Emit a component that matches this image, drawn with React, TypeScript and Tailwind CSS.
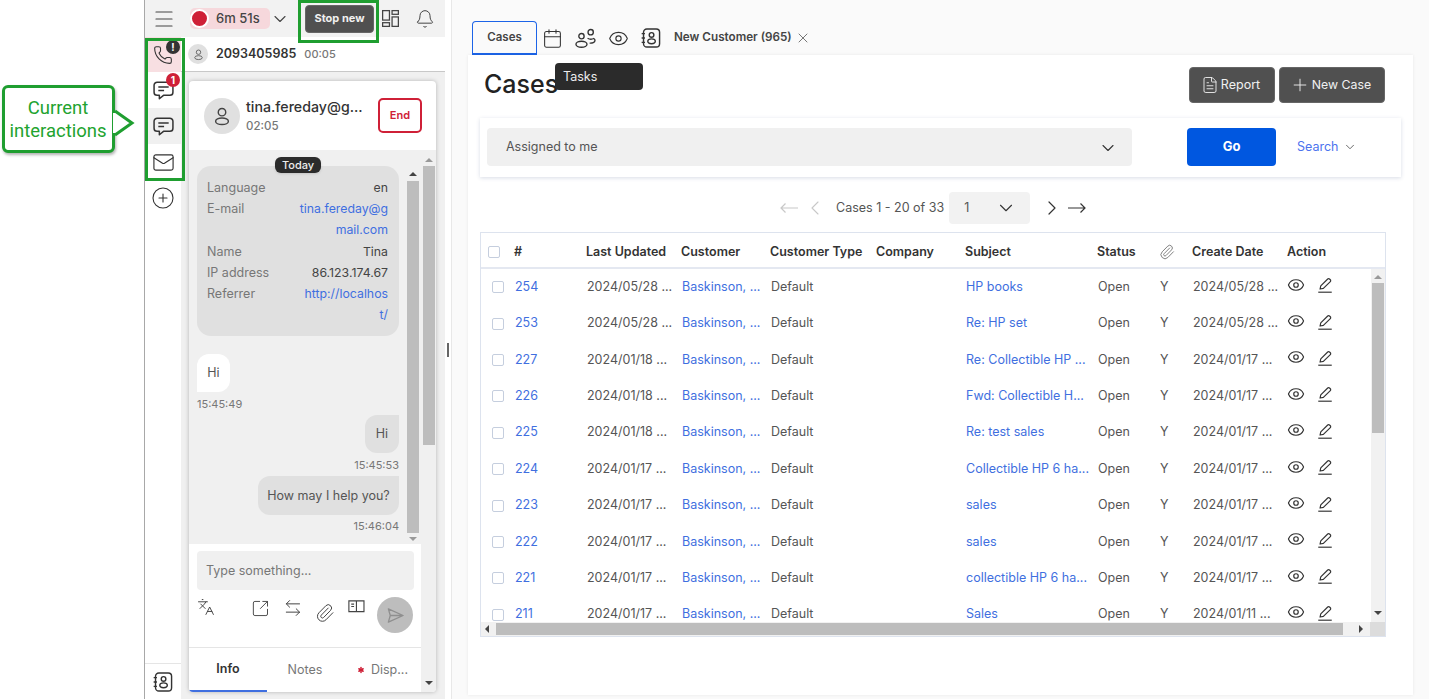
import React from 'react';
import {
  ArrowLeftRight, Asterisk, Bell, Calendar, ChevronDown, ChevronLeft, ChevronRight,
  CirclePlus, Eye, FileText, Languages, Mail, Menu, Paperclip, Phone, Plus, SquareArrowOutUpRight, X,
} from 'lucide-react';

const cols = 'grid grid-cols-[33px_72px_95px_89px_106px_89px_132px_62px_33px_95px_84px] items-center';

const rows = [
  ['254', '2024/05/28 ...', 'HP books', '2024/05/28 ...'],
  ['253', '2024/05/28 ...', 'Re: HP set', '2024/05/28 ...'],
  ['227', '2024/01/18 ...', 'Re: Collectible HP ...', '2024/01/17 ...'],
  ['226', '2024/01/18 ...', 'Fwd: Collectible H...', '2024/01/17 ...'],
  ['225', '2024/01/18 ...', 'Re: test sales', '2024/01/17 ...'],
  ['224', '2024/01/17 ...', 'Collectible HP 6 ha...', '2024/01/17 ...'],
  ['223', '2024/01/17 ...', 'sales', '2024/01/17 ...'],
  ['222', '2024/01/17 ...', 'sales', '2024/01/17 ...'],
  ['221', '2024/01/17 ...', 'collectible HP 6 ha...', '2024/01/17 ...'],
  ['211', '2024/01/17 ...', 'Sales', '2024/01/11 ...'],
];

function ChatIcon({ className }: { className?: string }) {
  return (
    <svg viewBox="0 0 20 20" fill="none" stroke="currentColor" strokeWidth="1.3" className={className}>
      <path d="M4.5 2.8h11a2.7 2.7 0 0 1 2.7 2.7v6a2.7 2.7 0 0 1-2.7 2.7H10l-3.6 3v-3H4.5a2.7 2.7 0 0 1-2.7-2.7v-6a2.7 2.7 0 0 1 2.7-2.7Z" strokeLinejoin="round" />
      <path d="M5.5 7h9M5.5 10h5" />
    </svg>
  );
}

function ContactIcon({ className }: { className?: string }) {
  return (
    <svg viewBox="0 0 20 20" fill="none" stroke="currentColor" strokeWidth="1.3" className={className}>
      <rect x="3.2" y="1.8" width="14.6" height="16.4" rx="3" />
      <path d="M1.5 6h3M1.5 10h3M1.5 14h3" />
      <circle cx="10.5" cy="7.2" r="2.1" />
      <ellipse cx="10.5" cy="13" rx="3.4" ry="2.2" />
    </svg>
  );
}

function PersonIcon({ className }: { className?: string }) {
  return (
    <svg viewBox="0 0 20 20" fill="none" stroke="currentColor" strokeWidth="1.3" className={className}>
      <circle cx="10" cy="6.5" r="3.4" />
      <ellipse cx="10" cy="14.8" rx="5.8" ry="3" />
    </svg>
  );
}

function GroupIcon({ className }: { className?: string }) {
  return (
    <svg viewBox="0 0 20 20" fill="none" stroke="currentColor" strokeWidth="1.2" className={className}>
      <circle cx="6.5" cy="8" r="2.3" />
      <ellipse cx="6.5" cy="15" rx="4.8" ry="2.6" />
      <circle cx="14.5" cy="4.5" r="2.3" />
      <path d="M11.8 9.8c1.6.9 4 .9 5.4.2 1.6.9 1.3 3-.4 3.6-1 .4-2 .5-3.2.4" />
    </svg>
  );
}

function PencilLine({ className }: { className?: string }) {
  return (
    <svg viewBox="0 0 20 20" fill="none" stroke="currentColor" strokeWidth="1.3" className={className}>
      <path d="M4.5 14.5 5.3 11 13 3.3a1.4 1.4 0 0 1 2 0l.9.9a1.4 1.4 0 0 1 0 2L8.2 13.800l-3.7.7Z" strokeLinejoin="round" />
      <path d="M2.5 18h15" />
    </svg>
  );
}

function Dashboard({ className }: { className?: string }) {
  return (
    <svg viewBox="0 0 20 20" fill="none" stroke="currentColor" strokeWidth="1.2" className={className}>
      <rect x="2.5" y="2.5" width="6.5" height="9" />
      <rect x="2.5" y="14" width="6.5" height="3.5" />
      <rect x="11.5" y="2.5" width="6" height="3.5" />
      <rect x="11.5" y="8.5" width="6" height="9" />
    </svg>
  );
}

function LongArrow({ flip, className }: { flip?: boolean; className?: string }) {
  return (
    <svg viewBox="0 0 18 12" fill="none" stroke="currentColor" strokeWidth="1.2" className={className}>
      <path d={flip ? 'M18 6H1M5.5 1.5 1 6l4.5 4.5' : 'M0 6h17M12.5 1.5 17 6l-4.5 4.5'} />
    </svg>
  );
}

function Triangle({ dir, className }: { dir: 'up' | 'down' | 'left' | 'right'; className?: string }) {
  const pts = { up: '1,6 5,2 9,6', down: '1,3 9,3 5,7', left: '6,1 6,9 2,5', right: '3,1 3,9 7,5' }[dir];
  return (
    <svg viewBox="0 0 10 10" className={className} fill="currentColor">
      <polygon points={pts} />
    </svg>
  );
}

function InfoRow({ label, value, link }: { label: string; value: string[]; link?: boolean }) {
  return (
    <div className="flex justify-between">
      <span className="text-[#777777]">{label}</span>
      <span className={link ? 'text-right text-[12.3px] text-[#3f6fe0]' : 'text-right text-[12.3px] text-[#444444]'}>
        {value.map((line) => (
          <span key={line} className="block">{line}</span>
        ))}
      </span>
    </div>
  );
}

function LeftPanel() {
  return (
    <div className="relative flex h-full w-[301px] shrink-0 flex-col border-l border-[#a8a8a8] bg-[#f0f0f0]">
      {/* top bar */}
      <div className="flex h-[37px] shrink-0 items-center bg-[#f2f2f2] pl-[7px]">
        <Menu className="h-[24px] w-[24px] text-[#444444]" strokeWidth={1.2} />
        <div className="ml-[14px] flex h-[21px] w-[80px] items-center rounded-[5px] bg-[#f6d8dc]">
          <span className="h-[19px] w-[19px] rounded-full border-2 border-white bg-[#cf2037]" />
          <span className="ml-[7px] text-[13px] font-medium text-[#444444]">6m 51s</span>
        </div>
        <ChevronDown className="h-[20px] w-[20px] text-[#444444]" strokeWidth={1.3} />
        <button className="ml-[15px] h-[28px] w-[69px] rounded-[4px] border border-[#666666] bg-[#505050] text-[11px] font-bold text-[#f0f0f0]">Stop new</button>
        <Dashboard className="ml-[6px] h-[21px] w-[21px] text-[#444444]" />
        <Bell className="ml-[14px] h-[20px] w-[20px] text-[#444444]" strokeWidth={1.2} />
      </div>

      <div className="flex min-h-0 flex-1">
        {/* rail */}
        <div className="flex w-[36px] shrink-0 flex-col items-center bg-white text-[#333333]">
          <div className="relative flex h-[35px] w-full items-center justify-center bg-[#f8dfe2]">
            <Phone className="h-[20px] w-[20px]" strokeWidth={1.3} />
            <span className="absolute right-[1px] top-[3px] flex h-[14px] w-[14px] items-center justify-center rounded-full bg-[#333333] text-[10px] font-bold text-white">!</span>
          </div>
          <div className="relative flex h-[36px] w-full items-center justify-center">
            <ChatIcon className="h-[23px] w-[23px]" />
            <span className="absolute right-[1px] top-[1px] flex h-[14px] w-[14px] items-center justify-center rounded-full bg-[#cf2037] text-[10px] font-bold text-white">1</span>
          </div>
          <div className="flex h-[36px] w-full items-center justify-center bg-[#f0f0f0]">
            <ChatIcon className="h-[23px] w-[23px]" />
          </div>
          <div className="flex h-[36px] w-full items-center justify-center">
            <Mail className="h-[23px] w-[23px]" strokeWidth={1.2} />
          </div>
          <div className="flex h-[35px] w-full items-center justify-center">
            <CirclePlus className="h-[24px] w-[24px]" strokeWidth={1.1} />
          </div>
          <div className="mt-auto flex h-[36px] w-full items-center justify-center border-t border-[#e5e5e5]">
            <ContactIcon className="h-[22px] w-[22px]" />
          </div>
        </div>

        <div className="flex min-w-0 flex-1 flex-col">
          <div className="flex h-[35px] shrink-0 items-center border-b border-[#c8c8c8] bg-white pl-[7px]">
            <span className="flex h-[20px] w-[20px] items-center justify-center rounded-full bg-[#e0e0e0] text-[#555555]">
              <PersonIcon className="h-[13px] w-[13px]" />
            </span>
            <span className="ml-[8px] text-[12.5px] font-semibold text-[#333333]">2093405985</span>
            <span className="ml-[8px] text-[11px] font-medium text-[#777777]">00:05</span>
          </div>

          {/* chat card */}
          <div className="ml-[8px] mt-[9px] flex h-[611px] w-[247px] flex-col overflow-hidden rounded-[4px] bg-white shadow-[0_0_4px_rgba(0,0,0,0.25)]">
            <div className="flex h-[69px] shrink-0 items-center pl-[15px] pr-[14px]">
              <span className="flex h-[36px] w-[36px] items-center justify-center rounded-full bg-[#e0e0e0] text-[#444444]">
                <PersonIcon className="h-[22px] w-[22px]" />
              </span>
              <div className="ml-[6px] flex-1">
                <div className="text-[14.2px] font-medium leading-[18px] text-[#333333]">tina.fereday@g...</div>
                <div className="mt-[2px] text-[11.5px] font-medium leading-[16px] text-[#777777]">02:05</div>
              </div>
              <button className="h-[35px] w-[44px] rounded-[5px] border-2 border-[#cf2037] text-[11px] font-semibold text-[#cf2037]">End</button>
            </div>

            <div className="flex min-h-0 flex-1">
              <div className="flex w-[232px] shrink-0 flex-col">
                <div className="relative flex h-[394px] shrink-0 bg-[#f0f0f0] pl-[8px] pt-[16px]">
                  <span className="absolute left-[86px] top-[7px] rounded-[6px] bg-[#2b2b2b] px-[7px] text-[11px] leading-[16px] font-medium text-[#eeeeee] shadow-sm">Today</span>
                  <div className="w-[202px] text-[12.5px]">
                    <div className="rounded-[14px] bg-[#e0e0e0] pb-[11px] pl-[10px] pr-[11px] pt-[11px] leading-[21.2px]">
                      <InfoRow label="Language" value={['en']} />
                      <InfoRow label="E-mail" value={['tina.fereday@g', 'mail.com']} link />
                      <InfoRow label="Name" value={['Tina']} />
                      <InfoRow label="IP address" value={['86.123.174.67']} />
                      <InfoRow label="Referrer" value={['http://localhos', 't/']} link />
                    </div>
                    <div className="mt-[18px] flex h-[38px] w-[33px] items-center justify-center rounded-[12px] rounded-bl-none bg-white text-[#555555]">Hi</div>
                    <div className="mt-[5px] text-[11px] leading-[14px] text-[#777777]">15:45:49</div>
                    <div className="ml-auto mt-[4px] flex h-[38px] w-[34px] items-center justify-center rounded-[12px] rounded-tr-none bg-[#e0e0e0] text-[#555555]">Hi</div>
                    <div className="mt-[5px] text-right text-[11px] leading-[14px] text-[#777777]">15:45:53</div>
                    <div className="ml-auto mt-[4px] flex h-[39px] w-[141px] items-center justify-center rounded-[12px] rounded-tr-none bg-[#e0e0e0] text-[#555555]">How may I help you?</div>
                    <div className="mt-[4px] text-right text-[11px] leading-[14px] text-[#777777]">15:46:04</div>
                  </div>
                  <div className="ml-[8px] flex w-[12px] flex-col items-center pt-[4px]">
                    <Triangle dir="up" className="h-[10px] w-[10px] text-[#444444]" />
                    <div className="mt-[1px] h-[352px] w-[12px] bg-[#bdbdbd]" />
                    <Triangle dir="down" className="mt-[1px] h-[10px] w-[10px] text-[#999999]" />
                  </div>
                </div>

                <div className="px-[8px] pt-[7px]">
                  <div className="flex h-[39px] w-[217px] items-center rounded-[4px] bg-[#f0f0f0] pl-[9px] pt-[2px] text-[12.5px] text-[#777777]">Type something...</div>
                  <div className="relative flex h-[56px] items-start text-[#444444]">
                    <Languages className="mt-[8px] h-[18px] w-[18px]" strokeWidth={1.3} />
                    <SquareArrowOutUpRight className="ml-[36px] mt-[9px] h-[19px] w-[19px]" strokeWidth={1.2} />
                    <ArrowLeftRight className="ml-[13px] mt-[8px] h-[20px] w-[20px]" strokeWidth={1.2} />
                    <Paperclip className="ml-[12px] mt-[13px] h-[20px] w-[20px]" strokeWidth={1.2} />
                    <svg viewBox="0 0 20 20" fill="none" stroke="currentColor" strokeWidth="1.2" className="ml-[13px] mt-[7px] h-[19px] w-[19px]">
                      <path d="M2 4h16v11.5H2zM10 4v11.5M4.5 7.5h3M4.5 10h3" />
                    </svg>
                    <span className="ml-[11px] mt-[7px] flex h-[36px] w-[36px] items-center justify-center rounded-full bg-[#bdbdbd] text-[#8f8f8f]">
                      <svg viewBox="0 0 20 20" fill="none" stroke="currentColor" strokeWidth="1.4" className="h-[19px] w-[19px]" strokeLinejoin="round">
                        <path d="M2.5 3 18 10 2.5 17l2-7-2-7ZM4.5 10H18" />
                      </svg>
                    </span>
                  </div>
                </div>

                <div className="mt-auto flex h-[45px] items-center border-t border-[#e5e5e5] text-[12.5px]">
                  <div className="flex h-full w-[78px] items-center justify-center border-b-2 border-[#3f6fe0] font-semibold text-[#333333]">Info</div>
                  <div className="flex h-full w-[76px] items-center justify-center text-[#777777]">Notes</div>
                  <div className="flex h-full flex-1 items-center justify-center text-[#777777]">
                    <Asterisk className="mr-[5px] h-[10px] w-[10px] text-[#cf2037]" strokeWidth={3.5} />Disp...
                  </div>
                </div>
              </div>

              <div className="flex w-[15px] flex-col items-center bg-[#f0f0f0] pt-[6px]">
                <Triangle dir="up" className="h-[10px] w-[10px] text-[#999999]" />
                <div className="h-[279px] w-[12px] bg-[#bdbdbd]" />
                <Triangle dir="down" className="mb-[4px] mt-auto h-[10px] w-[10px] text-[#444444]" />
              </div>
            </div>
          </div>
        </div>
      </div>

      {/* annotation frames */}
      <div className="pointer-events-none absolute left-0 top-[38px] h-[143px] w-[40px] border-[3px] border-[#1f9e30]" />
      <div className="pointer-events-none absolute left-[153px] top-0 h-[43px] w-[81px] border-[3px] border-[#1f9e30]" />
    </div>
  );
}

function CasesTable() {
  return (
    <div className="mt-[8px] flex h-[405px] w-[906px] flex-col border border-[#dde3ee] text-[12.5px]">
      <div className={`${cols} h-[36px] shrink-0 border-b-2 border-[#e4e8f1] pt-[4px] font-semibold text-[#333333]`}>
        <span className="ml-[7px] h-[12px] w-[12px] rounded-[2px] border border-[#c5cede]" />
        <span>#</span>
        <span>Last Updated</span>
        <span>Customer</span>
        <span>Customer Type</span>
        <span>Company</span>
        <span>Subject</span>
        <span>Status</span>
        <Paperclip className="h-[16px] w-[16px] text-[#777777]" strokeWidth={1.4} />
        <span>Create Date</span>
        <span>Action</span>
      </div>
      <div className="flex min-h-0 flex-1">
        <div className="min-w-0 flex-1 overflow-hidden">
          {rows.map((row) => (
            <div key={row[0]} className={`${cols} h-[36.4px] text-[#555555]`}>
              <span className="ml-[11px] h-[12px] w-[12px] rounded-[2px] border border-[#c5cede]" />
              <span className="pl-px text-[#3f6fe0]">{row[0]}</span>
              <span className="pl-px">{row[1]}</span>
              <span className="pl-px text-[#3f6fe0]">Baskinson, ...</span>
              <span className="pl-px">Default</span>
              <span />
              <span className="pl-px text-[#3f6fe0]">{row[2]}</span>
              <span className="pl-px">Open</span>
              <span className="pl-[1px]">Y</span>
              <span className="pl-px">{row[3]}</span>
              <span className="flex items-center text-[#333333]">
                <Eye className="mb-[5px] h-[18px] w-[18px]" strokeWidth={1.6} />
                <PencilLine className="mb-[4px] ml-[11px] h-[18px] w-[18px]" />
              </span>
            </div>
          ))}
        </div>
        <div className="flex w-[14px] shrink-0 flex-col items-center bg-[#f1f1f1]">
          <Triangle dir="up" className="mt-[4px] h-[10px] w-[10px] text-[#999999]" />
          <div className="h-[150px] w-[12px] bg-[#bdbdbd]" />
          <Triangle dir="down" className="mb-[4px] mt-auto h-[10px] w-[10px] text-[#444444]" />
        </div>
      </div>
      <div className="flex h-[14px] shrink-0 items-center bg-[#f1f1f1]">
        <Triangle dir="left" className="ml-[2px] h-[10px] w-[10px] text-[#444444]" />
        <div className="ml-[3px] h-[12px] w-[847px] bg-[#bdbdbd]" />
        <Triangle dir="right" className="ml-[13px] h-[10px] w-[10px] text-[#444444]" />
        <div className="ml-auto h-full w-[15px] bg-[#dcdcdc]" />
      </div>
    </div>
  );
}

function MainArea() {
  return (
    <div className="relative flex h-full min-w-0 flex-1 flex-col border-l border-[#e8e8e8] bg-[#fafafa] pl-[16px]">
      <div className="box-content flex h-[34px] shrink-0 items-center pl-[4px] pt-[21px] text-[#333333]">
        <div className="flex h-[34px] w-[65px] items-center justify-center rounded-t-[4px] border border-b-2 border-[#1c64e8] text-[11.5px] font-semibold text-[#444444]">Cases</div>
        <Calendar className="ml-[5px] h-[21px] w-[21px]" strokeWidth={1.2} />
        <GroupIcon className="ml-[11px] h-[23px] w-[23px]" />
        <Eye className="ml-[11px] h-[21px] w-[21px]" strokeWidth={1.3} />
        <ContactIcon className="ml-[11px] h-[22px] w-[22px]" />
        <span className="ml-[12px] text-[11.7px] font-semibold text-[#444444]">New Customer (965)</span>
        <X className="ml-[3px] h-[16px] w-[16px] text-[#555555]" strokeWidth={1.2} />
      </div>

      <div className="relative h-[640px] w-[945px] bg-white pl-[12px] pr-[12px] shadow-[0_0_3px_rgba(0,0,0,0.08)]">
        <div className="flex h-[63px] items-start justify-between pt-[9px]">
          <h1 className="ml-[4px] text-[25px] font-medium leading-[40px] text-[#222222]">Cases</h1>
          <div className="mr-[16px] mt-[3px] flex gap-[4px]">
            <button className="flex h-[36px] w-[86px] items-center justify-center gap-[2px] rounded-[4px] border border-[#666666] bg-[#505050] pr-[3px] text-[12.5px] text-[#f0f0f0]">
              <FileText className="h-[18px] w-[18px]" strokeWidth={1.2} />Report
            </button>
            <button className="flex h-[36px] w-[106px] items-center justify-center gap-[2px] rounded-[4px] border border-[#666666] bg-[#505050] pr-[3px] text-[12.3px] text-[#f0f0f0]">
              <Plus className="h-[20px] w-[20px]" strokeWidth={1.1} />New Case
            </button>
          </div>
        </div>

        <div className="flex h-[59px] w-[921px] items-center pb-[2px] pl-[7px] shadow-[0_1px_4px_rgba(60,80,130,0.2)]">
          <div className="flex h-[38px] w-[645px] items-center justify-between rounded-[4px] bg-[#f0f0f0] pl-[19px] pr-[14px] pt-[2px] text-[12.5px] text-[#555555]">
            Assigned to me
            <ChevronDown className="h-[20px] w-[20px] text-[#333333]" strokeWidth={1.3} />
          </div>
          <button className="ml-[55px] h-[38px] w-[89px] rounded-[4px] bg-[#0057e0] pt-[1px] text-[13px] font-bold text-white">Go</button>
          <span className="ml-[21px] mt-[1px] text-[12.5px] text-[#4c73ee]">Search</span>
          <ChevronDown className="ml-[5px] mt-[1px] h-[14px] w-[14px] text-[#555555]" strokeWidth={1.5} />
        </div>

        <div className="mt-[15px] flex h-[32px] items-center pl-[300px] text-[12.5px] text-[#555555]">
          <LongArrow flip className="h-[12px] w-[18px] text-[#c8c8c8]" />
          <ChevronLeft className="ml-[5px] h-[24px] w-[24px] text-[#c8c8c8]" strokeWidth={1.1} />
          <span className="ml-[9px]">Cases 1 - 20 of 33</span>
          <div className="ml-[5px] flex h-[32px] w-[81px] items-center justify-between rounded-[4px] bg-[#f2f2f2] pl-[15px] pr-[13px]">
            1
            <ChevronDown className="h-[22px] w-[22px] text-[#333333]" strokeWidth={1.2} />
          </div>
          <ChevronRight className="ml-[10px] h-[24px] w-[24px] text-[#333333]" strokeWidth={1.2} />
          <LongArrow className="ml-[4px] h-[12px] w-[18px] text-[#333333]" />
        </div>

        <CasesTable />
      </div>

      <div className="absolute left-[103px] top-[63px] flex h-[27px] w-[88px] items-center rounded-[4px] bg-[#2b2b2b] pl-[8px] pt-[1px] text-[12.5px] text-[#eeeeee]">Tasks</div>
    </div>
  );
}

export default function App() {
  return (
    <div className="flex h-[699px] w-[1429px] overflow-hidden bg-white font-['Inter',sans-serif]">
      <div className="w-[144px] shrink-0 pl-[2px] pt-[85px]">
        <div className="relative flex h-[68px] w-[113px] flex-col items-center justify-center rounded-[6px] border-[3px] border-[#1f9e30] bg-white pr-[1px] pt-[1px] font-['Roboto',sans-serif] text-[18.5px] leading-[23px] text-[#22a32f] shadow-[1px_2px_3px_rgba(0,0,0,0.3)]">
          <span>Current</span>
          <span>interactions</span>
          <svg viewBox="0 0 22 30" className="absolute left-[108px] top-[20px] h-[30px] w-[22px]">
            <path d="M2 3 19 15 2 27" fill="white" stroke="#1f9e30" strokeWidth="3" />
            <path d="M0 5h2v20H0z" fill="white" />
          </svg>
        </div>
      </div>
      <LeftPanel />
      <div className="flex w-[6px] shrink-0 items-center pl-[2px]">
        <div className="h-[14px] w-[2px] bg-[#666666]" />
      </div>
      <MainArea />
    </div>
  );
}
